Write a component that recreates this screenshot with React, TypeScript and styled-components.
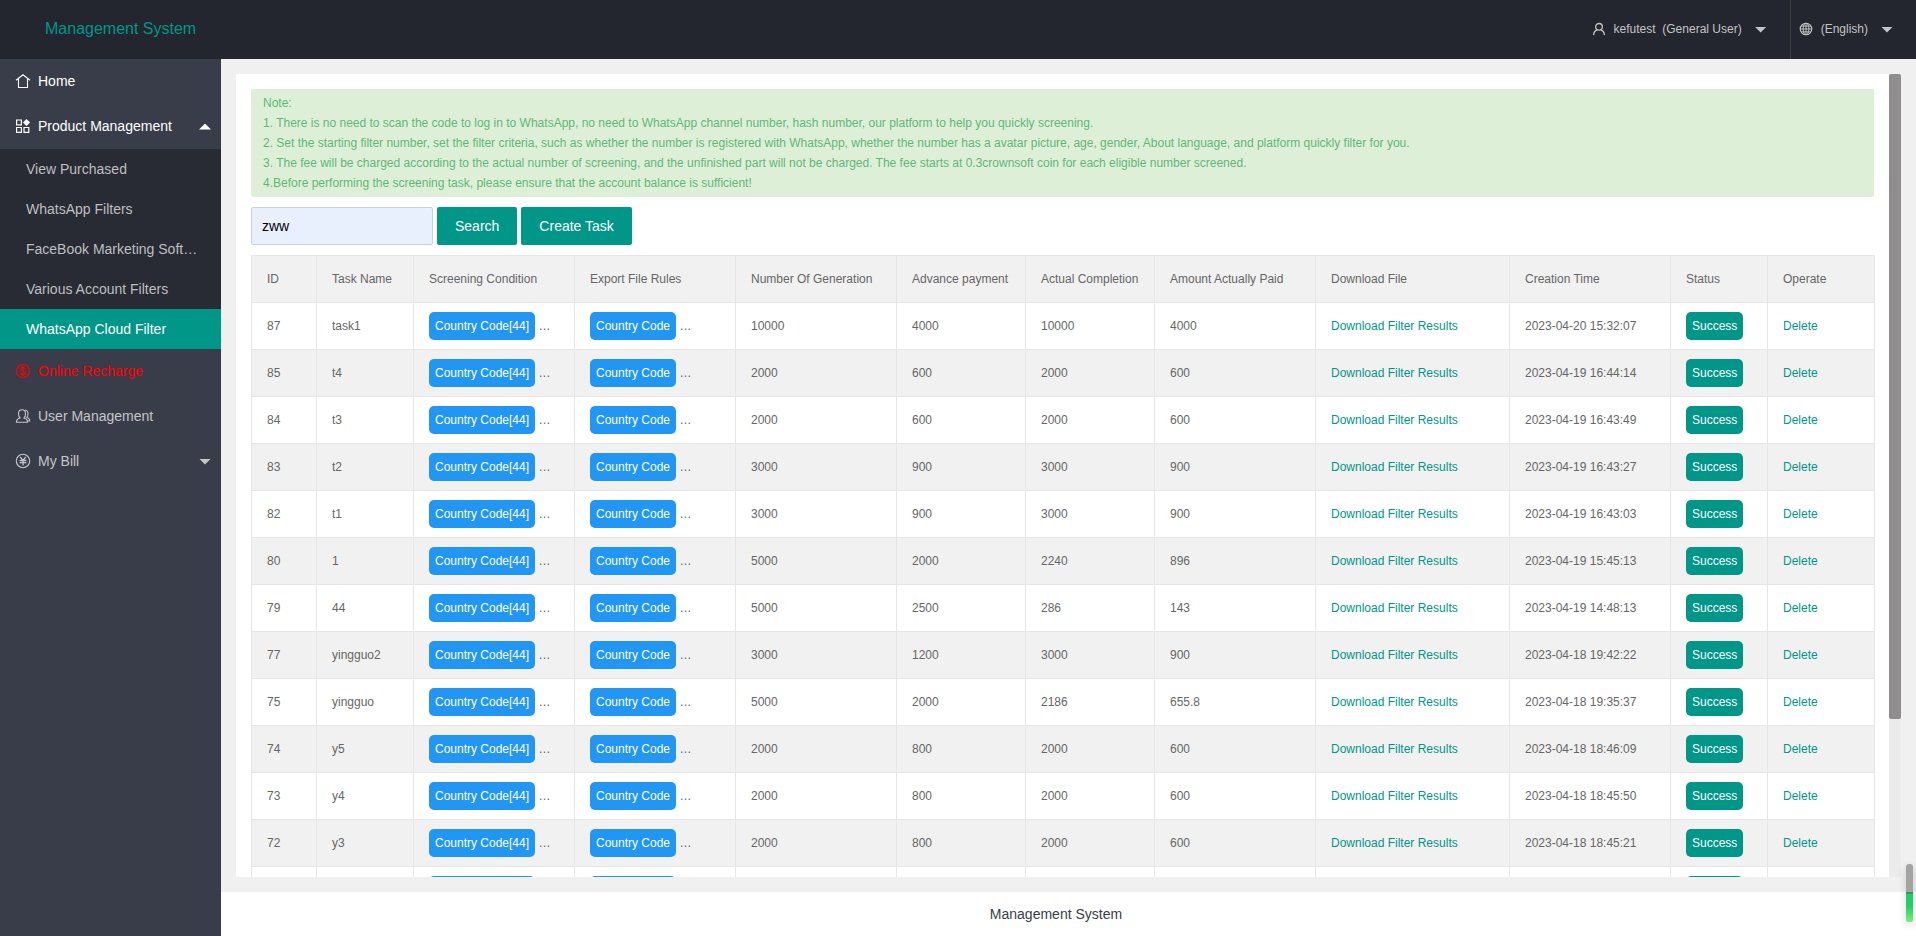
import React from "react";
import styled, { createGlobalStyle, css } from "styled-components";

const GlobalStyle = createGlobalStyle`
  *, *::before, *::after { box-sizing: border-box; }
  body {
    margin: 0;
    color: #373d48;
    font-family: "Liberation Sans", Arial, Helvetica, sans-serif;
    font-size: 14px;
    line-height: 24px;
  }
  button, input { font-family: inherit; }
  a { text-decoration: none; }
`;

const Page = styled.div`
  display: flex;
  flex-direction: column;
  height: 100vh;
  overflow: hidden;
`;

const Header = styled.header`
  display: flex;
  justify-content: space-between;
  flex: none;
  height: 59px;
  background: #23262e;
`;

const Brand = styled.h1`
  margin: 0;
  padding-left: 45px;
  color: #009688;
  font-size: 16px;
  font-weight: 400;
  line-height: 57px;
`;

const HeaderActions = styled.div`
  display: flex;
`;

const HeaderButton = styled.button`
  display: flex;
  align-items: center;
  padding: 0 23px 2px 8px;
  border: 0;
  background: transparent;
  color: #c4c4c4;
  font-size: 12px;
  white-space: pre;
  cursor: pointer;

  & + & { border-left: 1px solid #403f42; }

  svg { margin-right: 8px; }
`;

const Caret = styled.span<{ $up?: boolean; $bright?: boolean }>`
  width: 12px;
  height: 6px;
  margin-left: auto;
  background: ${(p) => (p.$bright ? "#fff" : "#c4c5c8")};
  clip-path: ${(p) => (p.$up ? "polygon(0 100%, 50% 0, 100% 100%)" : "polygon(0 0, 100% 0, 50% 100%)")};

  ${HeaderButton} & { margin: 2px 0 0 13px; }
`;

const Body = styled.div`
  display: flex;
  flex: 1;
  min-height: 0;
`;

const Sidebar = styled.nav`
  flex: none;
  width: 221px;
  background: #393d49;
`;

const MenuLink = styled.a<{ $tone?: "bright" | "alert" }>`
  display: flex;
  align-items: center;
  gap: 7px;
  height: 45px;
  padding: 0 10px 2px 15px;
  color: ${(p) => (p.$tone === "bright" ? "#fff" : p.$tone === "alert" ? "#f00" : "#c4c5c8")};

  ${Caret} { margin-top: 2px; }
`;

const SubMenu = styled.div`
  background: #282b33;
`;

const SubLink = styled.a<{ $active?: boolean }>`
  display: block;
  height: 40px;
  padding: 0 20px 0 26px;
  overflow: hidden;
  color: #bebfc2;
  line-height: 40px;
  text-overflow: ellipsis;
  white-space: nowrap;
  ${(p) => p.$active && css`
    background: #009688;
    color: #fff;
  `}
`;

const Main = styled.main`
  display: flex;
  flex: 1;
  flex-direction: column;
  min-width: 0;
`;

const Stage = styled.div`
  display: flex;
  flex: 1;
  min-height: 0;
  padding: 15px;
  background: #f0f0f0;
`;

const Panel = styled.section`
  flex: 1;
  min-width: 0;
  padding: 15px;
  overflow: hidden;
  background: #fff;
`;

const ScrollTrack = styled.div`
  display: grid;
  flex: none;
  grid-template-rows: 645fr 158fr;
  width: 12px;
  border-radius: 2px;
  background: #ebebeb;
`;

const ScrollThumb = styled.div`
  border-radius: 2px;
  background: #8f8d8e;
`;

const Note = styled.div`
  padding: 4px 12px;
  border-radius: 2px;
  background: #deefd8;
  color: #5fb878;
  font-size: 12px;
  line-height: 20px;

  p { margin: 0; }
`;

const Toolbar = styled.form`
  display: flex;
  gap: 4px;
  margin: 10px 0;
`;

const SearchInput = styled.input`
  width: 182px;
  height: 38px;
  padding: 0 10px;
  border: 1px solid #d0d0d3;
  border-radius: 2px;
  outline: none;
  background: #e8f0fe;
  color: #000;
  font-size: 14px;
`;

const ActionButton = styled.button`
  height: 38px;
  padding: 0 18px;
  border: 0;
  border-radius: 2px;
  background: #009688;
  color: #fff;
  font-size: 14px;
  cursor: pointer;
`;

const Table = styled.table`
  width: 100%;
  border-collapse: collapse;
  table-layout: fixed;
  color: #666;
  font-size: 12px;
  line-height: 28px;
  text-align: left;

  th, td {
    height: 47px;
    padding: 9px 15px;
    overflow: hidden;
    border: 1px solid #e6e6e6;
    font-weight: 400;
    white-space: nowrap;
  }

  thead tr, tbody tr:nth-child(even) { background: #f1f1f1; }
`;

const TableLink = styled.a`
  color: #009688;
`;

const tagWidths = { condition: 106, rule: 86, success: 57 };

const Tag = styled.span<{ $kind: keyof typeof tagWidths }>`
  display: inline-block;
  min-width: ${(p) => tagWidths[p.$kind]}px;
  height: 28px;
  padding: 0 6px;
  border-radius: 5px;
  background: ${(p) => (p.$kind === "success" ? "#009688" : "#2196f3")};
  color: #fff;
  vertical-align: top;
`;

const Footer = styled.footer`
  flex: none;
  height: 44px;
  padding-right: 25px;
  background: #fff;
  line-height: 44px;
  text-align: center;
`;

const Meter = styled.div`
  position: fixed;
  right: 3px;
  bottom: 14px;
  display: grid;
  grid-template-rows: 28fr 30fr;
  width: 7px;
  height: 58px;
  overflow: hidden;
  border-radius: 3px;
  background: #a3a3a3;
  box-shadow: 0 3px 8px rgba(0, 0, 0, 0.16);

  &::after {
    content: "";
    grid-row: 2;
    border-top: 2px solid #20a558;
    background: linear-gradient(#25cc6a 45%, #7cf27c);
  }
`;

type IconProps = { children: React.ReactNode; size?: number };

const Icon = ({ children, size = 16 }: IconProps) => (
  <svg width={size} height={size} viewBox="0 0 16 16" fill="none" stroke="currentColor" strokeWidth="1.1" aria-hidden="true">
    {children}
  </svg>
);

const HomeIcon = () => (
  <Icon>
    <path d="M1 7.3 8 1.8l7 5.500M3.500 6v8.500h9V6" />
  </Icon>
);

const ProductIcon = () => (
  <Icon>
    <path d="M1.600 2h4.800v4.800H1.600zM1.600 9.500h4.800v4.800H1.600zM9 9.500h4.800v4.800H9z" strokeWidth="1.200" />
    <path d="m11.500.9 3.600 3.600-3.600 3.600-3.600-3.600z" fill="currentColor" stroke="none" />
  </Icon>
);

const DollarIcon = () => (
  <Icon>
    <circle cx="8" cy="8" r="6.500" />
    <path d="M10.300 5.900c-.2-1-1-1.500-2.300-1.500s-2.200.6-2.200 1.700c0 2.400 4.500 1.300 4.500 3.800 0 1.100-.9 1.700-2.300 1.700s-2.200-.6-2.300-1.700M8 3v10" strokeWidth="1.200" />
  </Icon>
);

const UsersIcon = () => (
  <Icon>
    <path d="M1.400 14.200c0-2.400.9-3.400 3.600-4.200C3.800 8.900 3.500 7.600 3.500 5.700 3.500 3.200 4.800 1.800 7 1.800s3.500 1.400 3.500 3.900c0 1.900-.3 3.200-1.500 4.300 2.700.8 3.600 1.800 3.600 4.200z" />
    <path d="M10 2c2 .2 3 1.500 3 3.700 0 1.500-.3 2.700-1.200 3.600 2.100.8 2.900 1.700 2.900 3.700h-2" />
  </Icon>
);

const YenIcon = () => (
  <Icon>
    <circle cx="8" cy="8" r="6.700" />
    <path d="m5.200 3.800 2.800 3.700 2.800-3.700M8 7.500v5M4.600 7.500h6.800M4.600 9.700h6.800" strokeWidth="1.300" />
  </Icon>
);

const UserIcon = () => (
  <Icon size={14}>
    <circle cx="8" cy="5.500" r="3.800" strokeWidth="1.500" />
    <path d="M1.800 15c.2-3.300 1.700-5.200 4.100-6M14.200 15c-.2-3.300-1.700-5.200-4.100-6" strokeWidth="1.500" />
  </Icon>
);

const GlobeIcon = () => (
  <Icon size={14}>
    <circle cx="8" cy="8" r="6.600" strokeWidth="1.300" />
    <ellipse cx="8" cy="8" rx="3.300" ry="6.600" />
    <path d="M8 1.400v13.200M1.400 8h13.200M2.400 4.700h11.200M2.400 11.300h11.200" />
  </Icon>
);

const notes = [
  "Note:",
  "1. There is no need to scan the code to log in to WhatsApp, no need to WhatsApp channel number, hash number, our platform to help you quickly screening.",
  "2. Set the starting filter number, set the filter criteria, such as whether the number is registered with WhatsApp, whether the number has a avatar picture, age, gender, About language, and platform quickly filter for you.",
  "3. The fee will be charged according to the actual number of screening, and the unfinished part will not be charged. The fee starts at 0.3crownsoft coin for each eligible number screened.",
  "4.Before performing the screening task, please ensure that the account balance is sufficient!",
];

const subItems = [
  "View Purchased",
  "WhatsApp Filters",
  "FaceBook Marketing Software",
  "Various Account Filters",
  "WhatsApp Cloud Filter",
];

const columns: [string, number][] = [
  ["ID", 65],
  ["Task Name", 97],
  ["Screening Condition", 161],
  ["Export File Rules", 161],
  ["Number Of Generation", 161],
  ["Advance payment", 129],
  ["Actual Completion", 129],
  ["Amount Actually Paid", 161],
  ["Download File", 194],
  ["Creation Time", 161],
  ["Status", 97],
  ["Operate", 107],
];

type Task = [id: number, name: string, generated: number, advance: number, completed: number, paid: number, created: string];

const tasks: Task[] = [
  [87, "task1", 10000, 4000, 10000, 4000, "2023-04-20 15:32:07"],
  [85, "t4", 2000, 600, 2000, 600, "2023-04-19 16:44:14"],
  [84, "t3", 2000, 600, 2000, 600, "2023-04-19 16:43:49"],
  [83, "t2", 3000, 900, 3000, 900, "2023-04-19 16:43:27"],
  [82, "t1", 3000, 900, 3000, 900, "2023-04-19 16:43:03"],
  [80, "1", 5000, 2000, 2240, 896, "2023-04-19 15:45:13"],
  [79, "44", 5000, 2500, 286, 143, "2023-04-19 14:48:13"],
  [77, "yingguo2", 3000, 1200, 3000, 900, "2023-04-18 19:42:22"],
  [75, "yingguo", 5000, 2000, 2186, 655.8, "2023-04-18 19:35:37"],
  [74, "y5", 2000, 800, 2000, 600, "2023-04-18 18:46:09"],
  [73, "y4", 2000, 800, 2000, 600, "2023-04-18 18:45:50"],
  [72, "y3", 2000, 800, 2000, 600, "2023-04-18 18:45:21"],
];

const TaskRow = ({ task }: { task: Task }) => {
  const [id, name, generated, advance, completed, paid, created] = task;
  return (
    <tr>
      <td>{id}</td>
      <td>{name}</td>
      <td><Tag $kind="condition">Country Code[44]</Tag> …</td>
      <td><Tag $kind="rule">Country Code</Tag> …</td>
      <td>{generated}</td>
      <td>{advance}</td>
      <td>{completed}</td>
      <td>{paid}</td>
      <td><TableLink href="#download">Download Filter Results</TableLink></td>
      <td>{created}</td>
      <td><Tag $kind="success">Success</Tag></td>
      <td><TableLink href="#delete">Delete</TableLink></td>
    </tr>
  );
};

const PendingRow = () => (
  <tr aria-hidden="true">
    <td /><td />
    <td><Tag $kind="condition" /></td>
    <td><Tag $kind="rule" /></td>
    <td /><td /><td /><td /><td /><td />
    <td><Tag $kind="success" /></td>
    <td />
  </tr>
);

export default function App() {
  return (
    <Page>
      <GlobalStyle />
      <Header>
        <Brand>Management System</Brand>
        <HeaderActions>
          <HeaderButton type="button">
            <UserIcon />
            {"kefutest  (General User)"}
            <Caret />
          </HeaderButton>
          <HeaderButton type="button">
            <GlobeIcon />
            (English)
            <Caret />
          </HeaderButton>
        </HeaderActions>
      </Header>
      <Body>
        <Sidebar>
          <MenuLink href="#home" $tone="bright"><HomeIcon />Home</MenuLink>
          <MenuLink href="#products" $tone="bright"><ProductIcon />Product Management<Caret $up $bright /></MenuLink>
          <SubMenu>
            {subItems.map((label) => (
              <SubLink key={label} href="#item" $active={label === "WhatsApp Cloud Filter"}>{label}</SubLink>
            ))}
          </SubMenu>
          <MenuLink href="#recharge" $tone="alert"><DollarIcon />Online Recharge</MenuLink>
          <MenuLink href="#users"><UsersIcon />User Management</MenuLink>
          <MenuLink href="#bill"><YenIcon />My Bill<Caret /></MenuLink>
        </Sidebar>
        <Main>
          <Stage>
            <Panel>
              <Note>
                {notes.map((line) => <p key={line}>{line}</p>)}
              </Note>
              <Toolbar onSubmit={(e) => e.preventDefault()}>
                <SearchInput type="text" aria-label="Task name" defaultValue="zww" />
                <ActionButton type="submit">Search</ActionButton>
                <ActionButton type="button">Create Task</ActionButton>
              </Toolbar>
              <Table>
                <colgroup>
                  {columns.map(([label, width]) => <col key={label} style={{ width }} />)}
                </colgroup>
                <thead>
                  <tr>{columns.map(([label]) => <th key={label} scope="col">{label}</th>)}</tr>
                </thead>
                <tbody>
                  {tasks.map((task) => <TaskRow key={task[0]} task={task} />)}
                  <PendingRow />
                </tbody>
              </Table>
            </Panel>
            <ScrollTrack><ScrollThumb /></ScrollTrack>
          </Stage>
          <Footer>Management System</Footer>
        </Main>
      </Body>
      <Meter />
    </Page>
  );
}
